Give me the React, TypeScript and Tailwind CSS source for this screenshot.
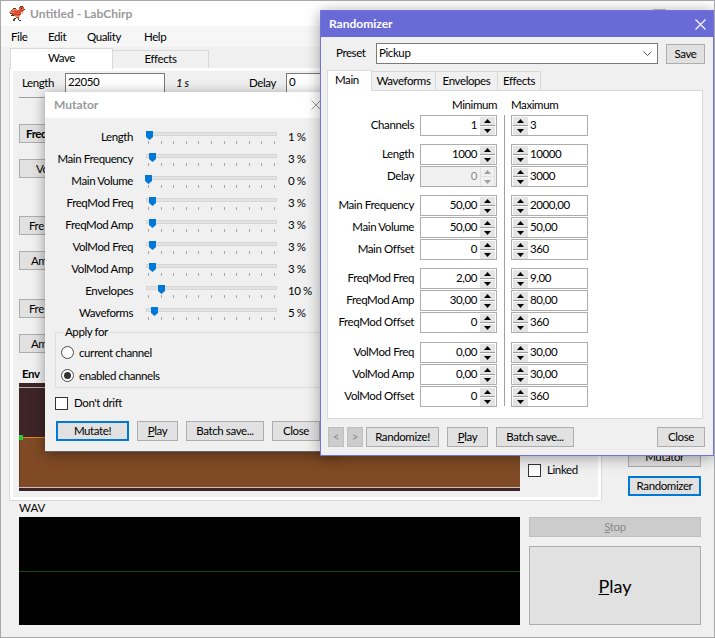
import React from "react";

const font = "font-['Lato','Liberation_Sans',sans-serif]";

function Bird() {
  const px: [number, number, number, number, string][] = [
    [11, 0, 3, 1, "#6a3020"], [10, 1, 5, 1, "#d84a30"], [10, 2, 5, 2, "#e8583a"], [15, 3, 1, 1, "#3a2a2a"],
    [12, 2, 1, 1, "#2a2020"], [4, 2, 3, 1, "#5a3a30"], [3, 3, 5, 1, "#f08a5c"], [2, 4, 8, 1, "#e86a44"],
    [9, 4, 6, 1, "#d8482e"], [1, 5, 13, 1, "#e0583a"], [0, 6, 5, 1, "#f09a68"], [5, 6, 8, 1, "#d8482e"],
    [1, 7, 4, 1, "#5a3a30"], [4, 7, 8, 1, "#e0583a"], [12, 6, 2, 2, "#f0c8a8"], [3, 8, 9, 1, "#c84028"],
    [2, 9, 3, 1, "#4a3028"], [5, 9, 6, 1, "#e06a44"], [6, 10, 5, 1, "#f09a68"], [7, 11, 3, 1, "#c84028"],
    [5, 12, 2, 1, "#4a3028"], [9, 12, 1, 2, "#4a3028"], [4, 13, 2, 2, "#6a4030"], [10, 14, 2, 1, "#4a3028"],
  ];
  return (
    <svg width="16" height="16" viewBox="0 0 16 16" shapeRendering="crispEdges">
      {px.map(([x, y, w, h, c], i) => <rect key={i} x={x} y={y} width={w} height={h} fill={c} />)}
    </svg>
  );
}

function Btn({ children, w, focus, className = "" }: { children: React.ReactNode; w: number; focus?: boolean; className?: string }) {
  return (
    <div style={{ width: w }} className={"h-[20px] shrink-0 flex items-center justify-center bg-[#e1e1e1] text-black " + (focus ? "border-2 border-[#0078d7] " : "border border-[#adadad] ") + className}>
      {children}
    </div>
  );
}

function Arrow({ up, dim }: { up?: boolean; dim?: boolean }) {
  return (
    <svg width="7" height="4" viewBox="0 0 7 4">
      <path d={up ? "M3.5 0 L7 4 L0 4Z" : "M0 0 L7 0 L3.5 4Z"} fill={dim ? "#a0a0a0" : "#000"} />
    </svg>
  );
}

function Spin({ dim }: { dim?: boolean }) {
  const cell = "h-[8px] flex items-center justify-center " + (dim ? "bg-[#f0f0f0]" : "bg-[#e4e4e4]");
  return (
    <div className={"w-[15px] h-[18px] shrink-0 flex flex-col justify-between " + (dim ? "border border-[#e0e0e0] border-y-0" : "")}>
      <div className={cell}><Arrow up dim={dim} /></div>
      <div className={dim ? "h-[1px] bg-[#e0e0e0]" : "h-[1px] bg-[#9a9a9a]"} />
      <div className={cell}><Arrow dim={dim} /></div>
    </div>
  );
}

function NumMin({ v, dim }: { v: string; dim?: boolean }) {
  return (
    <div className={"h-[21px] w-[77px] border border-[#adadad] flex items-center justify-end pr-[1px] " + (dim ? "bg-[#f0f0f0] text-[#8a8a8a]" : "bg-white")}>
      <span className="mr-[3px] -mt-[2px]">{v}</span>
      <Spin dim={dim} />
    </div>
  );
}

function NumMax({ v }: { v: string }) {
  return (
    <div className="h-[21px] w-[77px] border border-[#adadad] bg-white flex items-center pl-[1px]">
      <Spin />
      <span className="ml-[2px] -mt-[2px]">{v}</span>
    </div>
  );
}

const groups: [string, string, string, boolean?][][] = [
  [["Channels", "1", "3"]],
  [["Length", "1000", "10000"], ["Delay", "0", "3000", true]],
  [["Main Frequency", "50,00", "2000,00"], ["Main Volume", "50,00", "50,00"], ["Main Offset", "0", "360"]],
  [["FreqMod Freq", "2,00", "9,00"], ["FreqMod Amp", "30,00", "80,00"], ["FreqMod Offset", "0", "360"]],
  [["VolMod Freq", "0,00", "30,00"], ["VolMod Amp", "0,00", "30,00"], ["VolMod Offset", "0", "360"]],
];

const groupGap = ["", "mt-[7px]", "mt-[7px]", "mt-[7px]", "mt-[8px]"];

function Randomizer() {
  return (
    <div className="absolute left-[319px] top-[9px] w-[394px] h-[446px] border border-[#7474d8] bg-[#f0f0f0] shadow-[0_2px_14px_rgba(0,0,0,0.35)] z-20">
      <div className="h-[26px] bg-[#6a6ad6] flex items-center justify-between pl-[8px] pr-[7px]">
        <span className="font-bold text-white text-[12px] tracking-normal">Randomizer</span>
        <svg width="11" height="11" viewBox="0 0 11 11"><path d="M0.5 0.5 L10.5 10.5 M10.5 0.5 L0.5 10.5" stroke="#fff" strokeWidth="1.1" /></svg>
      </div>
      <div className="flex items-center h-[21px] mt-[6px] ml-[15px]">
        <span className="w-[40px] -mt-[2px]">Preset</span>
        <div className="w-[282px] h-[21px] border border-[#7a7a7a] bg-white flex items-center justify-between pl-[2px] pr-[5px]">
          <span className="-mt-[2px]">Pickup</span>
          <svg width="9" height="6" viewBox="0 0 9 6"><path d="M0.5 0.5 L4.5 4.5 L8.5 0.5" fill="none" stroke="#555" /></svg>
        </div>
        <Btn w={39} className="ml-[8px]">Save</Btn>
      </div>
      <div className="flex items-end h-[21px] ml-[6px] mt-[5px]">
        <div className="w-[45px] h-[21px] bg-white border border-b-0 border-[#d9d9d9] pl-[7px] pt-[1px] z-10 relative top-[1px]">Main</div>
        <div className="w-[64px] h-[19px] bg-[#f0f0f0] border border-l-0 border-b-0 border-[#d9d9d9] text-center pt-[1px]">Waveforms</div>
        <div className="w-[62px] h-[19px] bg-[#f0f0f0] border border-l-0 border-b-0 border-[#d9d9d9] text-center pt-[1px]">Envelopes</div>
        <div className="w-[43px] h-[19px] bg-[#f0f0f0] border border-l-0 border-b-0 border-[#d9d9d9] text-center pt-[1px]">Effects</div>
      </div>
      <div className="ml-[6px] w-[376px] h-[329px] bg-white border border-[#d9d9d9]">
        <div className="flex h-[16px] mt-[6px] pl-[124px]">
          <span className="w-[59px]">Minimum</span>
          <span>Maximum</span>
        </div>
        <div className="flex mt-[2px]">
          <div className="w-[86px] text-right">
            {groups.map((g, i) => (
              <div key={i} className={groupGap[i]}>
                {g.map(r => <div key={r[0]} className="h-[22px] leading-[20px] whitespace-nowrap">{r[0]}</div>)}
              </div>
            ))}
          </div>
          <div className="ml-[6px]">
            {groups.map((g, i) => (
              <div key={i} className={groupGap[i]}>
                {g.map(r => <div key={r[0]} className="h-[22px]"><NumMin v={r[1]} dim={r[3]} /></div>)}
              </div>
            ))}
          </div>
          <div className="w-[14px] flex justify-center">
            <div className="w-[1px] h-[291px] bg-[#a0a0a0]" />
          </div>
          <div>
            {groups.map((g, i) => (
              <div key={i} className={groupGap[i]}>
                {g.map(r => <div key={r[0]} className="h-[22px]"><NumMax v={r[2]} /></div>)}
              </div>
            ))}
          </div>
        </div>
      </div>
      <div className="flex items-center h-[21px] mt-[7px] pl-[7px] pr-[8px]">
        <div className="w-[16px] h-[20px] bg-[#cccccc] border border-[#bfbfbf] text-[#8a8a8a] flex items-center justify-center">&lt;</div>
        <div className="w-[16px] h-[20px] ml-[3px] bg-[#cccccc] border border-[#bfbfbf] text-[#8a8a8a] flex items-center justify-center">&gt;</div>
        <Btn w={73} className="ml-[3px]">Randomize!</Btn>
        <Btn w={41} className="ml-[8px]"><span><u>P</u>lay</span></Btn>
        <Btn w={78} className="ml-[8px]">Batch save...</Btn>
        <Btn w={48} className="ml-auto">Close</Btn>
      </div>
    </div>
  );
}

const sliders: [string, number, number][] = [
  ["Length", 1, 3], ["Main Frequency", 3, 6.5], ["Main Volume", 0, 2.5], ["FreqMod Freq", 3, 6.5], ["FreqMod Amp", 3, 6.5],
  ["VolMod Freq", 3, 6.5], ["VolMod Amp", 3, 6.5], ["Envelopes", 10, 15.5], ["Waveforms", 5, 8.5],
];

function Slider({ pos }: { pos: number }) {
  return (
    <div className="relative w-[131px] h-[22px] ml-[13px]">
      <div className="absolute left-0 right-0 top-[5px] h-[4px] bg-[#e2e4e3] border border-[#d6d6d6]" />
      <svg className="absolute top-[4px]" style={{ left: pos - 3.5 }} width="7" height="9" viewBox="0 0 7 9">
        <path d="M0 0 H7 V6 L3.5 9 L0 6Z" fill="#0078d7" />
      </svg>
      <div className="absolute left-[2px] right-[2px] top-[14px] flex justify-between">
        {Array.from({ length: 11 }).map((_, i) => <div key={i} className="w-[1px] h-[3px] bg-[#a8a8a8]" />)}
      </div>
    </div>
  );
}

function Radio({ on, label }: { on?: boolean; label: string }) {
  return (
    <div className="flex items-center h-[23px]">
      <div className="w-[13px] h-[13px] rounded-full border border-[#4a4a4a] bg-white flex items-center justify-center">
        {on && <div className="w-[7px] h-[7px] rounded-full bg-[#333]" />}
      </div>
      <span className="ml-[5px]">{label}</span>
    </div>
  );
}

function Mutator() {
  return (
    <div className="absolute left-[44px] top-[91px] w-[291px] h-[360px] bg-[#f0f0f0] border-b border-[#666] shadow-[0_2px_12px_rgba(0,0,0,0.4)] z-10">
      <div className="h-[26px] bg-white flex items-center justify-between pl-[9px] pr-[15px]">
        <span className="font-bold text-[#9a9a9a] text-[12px] tracking-normal">Mutator</span>
        <svg width="10" height="10" viewBox="0 0 10 10"><path d="M0.5 0.5 L9.5 9.5 M9.5 0.5 L0.5 9.5" stroke="#9a9a9a" /></svg>
      </div>
      <div className="pt-[9px]">
        {sliders.map(([l, v, p]) => (
          <div key={l} className="flex h-[22px]">
            <div className="w-[88px] text-right whitespace-nowrap leading-[20px]">{l}</div>
            <Slider pos={p} />
            <div className="ml-[11px] leading-[20px] whitespace-nowrap">{v} %</div>
          </div>
        ))}
      </div>
      <div className="relative ml-[10px] mt-[7px] w-[281px] h-[56px] border border-[#dcdcdc] border-r-0 pl-[5px] pt-[8px]">
        <div className="absolute -top-[8px] left-[7px] bg-[#f0f0f0] px-[2px] leading-[14px]">Apply for</div>
        <Radio label="current channel" />
        <Radio on label="enabled channels" />
      </div>
      <div className="flex items-center h-[14px] mt-[8px] ml-[10px]">
        <div className="w-[13px] h-[13px] border border-[#333] bg-white" />
        <span className="ml-[6px]">Don't drift</span>
      </div>
      <div className="flex mt-[11px] ml-[11px]">
        <Btn w={73} focus>Mutate!</Btn>
        <Btn w={41} className="ml-[8px]"><span><u>P</u>lay</span></Btn>
        <Btn w={78} className="ml-[8px]">Batch save...</Btn>
        <Btn w={48} className="ml-[8px]">Close</Btn>
      </div>
    </div>
  );
}

function SideBtn({ label, top, left, bold }: { label: string; top: number; left: number; bold?: boolean }) {
  return (
    <div style={{ marginTop: top, paddingLeft: left }} className={"ml-[6px] w-[73px] h-[19px] border border-[#adadad] bg-[#e1e1e1] flex items-center whitespace-nowrap " + (bold ? "font-bold" : "")}>
      {label}
    </div>
  );
}

export default function App() {
  return (
    <div className={"relative w-[715px] h-[638px] overflow-hidden border border-[#a8a8a8] bg-[#f0f0f0] text-[11.5px] tracking-[-0.4px] text-black leading-[16px] " + font}>
      <div className="h-[25px] bg-white flex items-center pl-[8px]">
        <Bird />
        <span className="ml-[5px] font-bold text-[#9a9a9a] text-[12px] tracking-normal">Untitled - LabChirp</span>
        <div className="ml-auto mr-[48px] w-[13px] h-[10px] border border-[#bbb]" />
      </div>
      <div className="h-[21px] bg-[#f6f6f6] flex items-center pl-[10px]">
        <span className="w-[37px]">File</span><span className="w-[39px]">Edit</span><span className="w-[57px]">Quality</span><span>Help</span>
      </div>
      <div className="flex items-end h-[21px] ml-[9px]">
        <div className="w-[103px] h-[21px] bg-white border border-b-0 border-[#d9d9d9] text-center pt-[1px] relative z-[1] top-[1px]">Wave</div>
        <div className="w-[96px] h-[18px] bg-[#f0f0f0] border border-l-0 border-b-0 border-[#d9d9d9] text-center">Effects</div>
      </div>
      <div className="flex h-[432px]">
        <div className="ml-[9px] w-[591px] h-[432px] border-[3px] border-white shadow-[0_1px_0_#d9d9d9,-1px_0_0_#d9d9d9,1px_0_0_#d9d9d9] bg-[#f0f0f0]">
          <div className="flex items-center h-[20px] mt-[2px] pl-[9px]">
            <span className="w-[43px]">Length</span>
            <div className="w-[100px] h-[20px] border border-[#7a7a7a] bg-white pl-[2px]">22050</div>
            <span className="ml-[11px] italic w-[73px]">1 s</span>
            <span className="w-[37px]">Delay</span>
            <div className="w-[60px] h-[20px] border border-[#7a7a7a] bg-white pl-[2px]">0</div>
          </div>
          <div className="w-[40px] h-[1px] bg-[#a0a0a0] ml-[6px] mt-[4px]" />
          <SideBtn label="Freq" left={6} bold top={26} />
          <SideBtn label="Vo" left={16} top={16} />
          <SideBtn label="Fre" left={9} top={38} />
          <SideBtn label="Am" left={11} top={16} />
          <SideBtn label="Fre" left={9} top={29} />
          <SideBtn label="Am" left={11} top={16} />
          <div className="font-bold mt-[13px] ml-[9px] h-[16px] leading-[16px]">Env</div>
          <div className="relative ml-[6px] mt-[1px] w-[501px] h-[108px] bg-[#3e2428]">
            <div className="h-[4px]" />
            <div className="h-[1px] bg-[#b8b0b0]" />
            <div className="h-[49px]" />
            <div className="h-[1px] bg-[#e08a1c]" />
            <div className="h-[49px] bg-[#7f4a25] border-l border-[#5c3a2a]" />
            <div className="h-[1px] bg-[#c8c0c0]" />
            <div className="absolute left-0 top-[52px] w-[4px] h-[5px] bg-[#22cc33]" />
          </div>
        </div>
        <div className="relative -top-[1px] flex flex-col">
          <div className="flex items-center absolute left-[-73px] top-[395px] whitespace-nowrap">
            <div className="w-[13px] h-[13px] border border-[#333] bg-white" />
            <span className="ml-[6px]">Linked</span>
          </div>
          <div className="mt-auto ml-[27px] w-[73px] flex flex-col gap-[9px] mb-[3px]">
            <Btn w={73}>Mutator</Btn>
            <Btn w={73} focus>Randomizer</Btn>
          </div>
        </div>
      </div>
      <div className="flex pl-[18px] mt-[1px]">
        <div className="w-[501px]">
          <div className="h-[16px] leading-[14px] tracking-normal">WAV</div>
          <div className="h-[108px] bg-black flex items-center">
            <div className="w-full h-[1px] bg-[#0f4f0f]" />
          </div>
        </div>
        <div className="ml-[9px] w-[172px] mt-[16px]">
          <div className="h-[20px] bg-[#cccccc] border border-[#bfbfbf] text-[#8a8a8a] flex items-center justify-center"><span><u>S</u>top</span></div>
          <div className="h-[79px] mt-[9px] border border-[#adadad] bg-[#e1e1e1] flex items-center justify-center text-[18px] tracking-normal"><span><u>P</u>lay</span></div>
        </div>
      </div>
      <Mutator />
      <Randomizer />
    </div>
  );
}
